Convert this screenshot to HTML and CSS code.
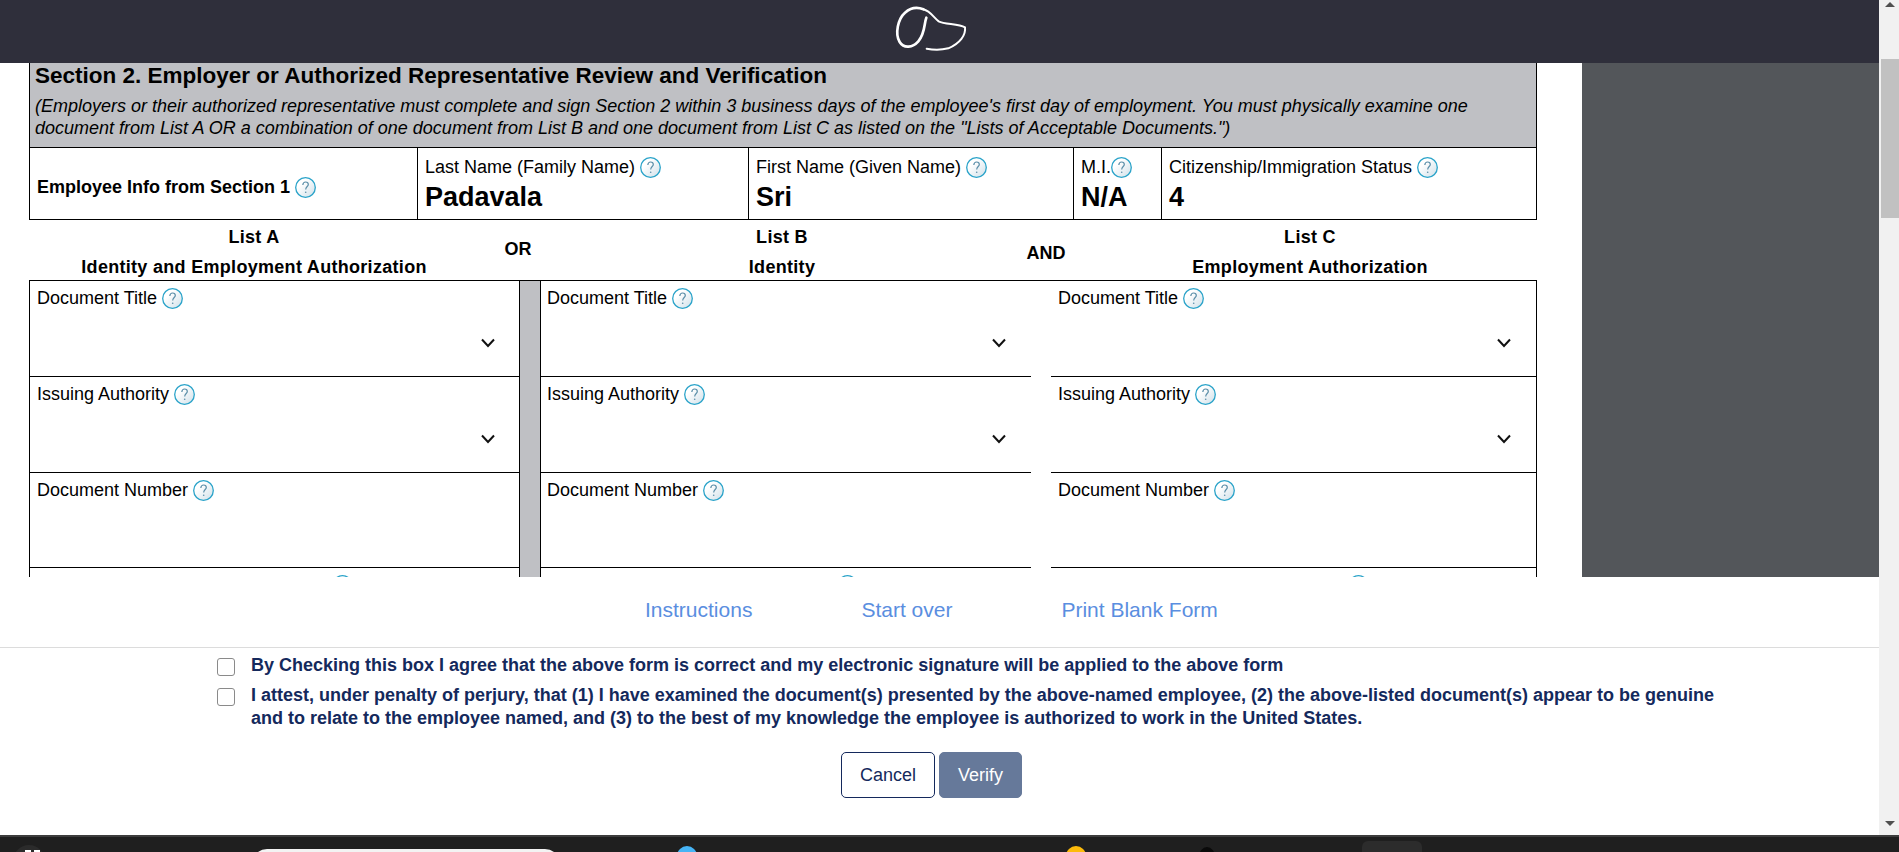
FILE: index.html
```html
<!DOCTYPE html>
<html lang="en">
  <head>
    <meta charset="UTF-8" />
    <meta name="viewport" content="width=device-width, initial-scale=1.0" />
    <title>Section 2 Verification</title>
    <link rel="stylesheet" href="styles.css">
  </head>

  <body>
    <svg class="defs" width="0" height="0">
      <defs>
        <linearGradient id="helpFill" x1="0" y1="0" x2="1" y2="1">
          <stop offset="0.3" stop-color="#ffffff" />
          <stop offset="1" stop-color="#cfdfe8" />
        </linearGradient>
      </defs>
    </svg>

    <div class="window">
      <div class="page">
        <header class="topbar">
          <svg class="logo" width="100" height="60" viewBox="0 0 300 180" fill="none" stroke="#fff" stroke-linecap="round">
            <path d="M139 53C132 70 136 100 115 124C98 143 72 147 59 126C44 102 54 56 75 38C90 25 110 20 130 28" stroke-width="8" />
            <path d="M130 28C152 34 160 52 176 64C195 74 235 70 255 82C258 105 240 130 205 145C185 150 160 150 140 146" stroke-width="6" />
          </svg>
        </header>

        <div class="viewer">
          <div class="doc">
            <section class="form-head">
              <h1>Section 2. Employer or Authorized Representative Review and Verification</h1>
              <p>(Employers or their authorized representative must complete and sign Section 2 within 3 business days of the employee's first day of employment. You must physically examine one document from List A OR a combination of one document from List B and one document from List C as listed on the "Lists of Acceptable Documents.")</p>
            </section>

            <section class="employee-row">
              <div class="cell cell-intro"><b>Employee Info from Section 1</b><svg class="help"><use href="#help" /></svg></div>
              <div class="cell"><span class="label">Last Name (Family Name)<svg class="help"><use href="#help" /></svg></span><strong>Padavala</strong></div>
              <div class="cell"><span class="label">First Name (Given Name)<svg class="help"><use href="#help" /></svg></span><strong>Sri</strong></div>
              <div class="cell"><span class="label">M.I.<svg class="help help-tight"><use href="#help" /></svg></span><strong>N/A</strong></div>
              <div class="cell"><span class="label">Citizenship/Immigration Status<svg class="help"><use href="#help" /></svg></span><strong>4</strong></div>
            </section>

            <section class="list-heads">
              <div class="list-title">List A<br />Identity and Employment Authorization</div>
              <div class="list-join join-or">OR</div>
              <div class="list-title">List B<br />Identity</div>
              <div class="list-join join-and">AND</div>
              <div class="list-title">List C<br />Employment Authorization</div>
            </section>

            <section class="lists">
              <div class="list list-first">
                <div class="field"><span class="label">Document Title<svg class="help"><use href="#help" /></svg></span><svg class="chevron"><use href="#chevron" /></svg></div>
                <div class="field"><span class="label">Issuing Authority<svg class="help"><use href="#help" /></svg></span><svg class="chevron"><use href="#chevron" /></svg></div>
                <div class="field"><span class="label">Document Number<svg class="help"><use href="#help" /></svg></span></div>
                <div class="field"><span class="label"><svg class="help help-far"><use href="#help" /></svg></span></div>
              </div>
              <div class="divider"></div>
              <div class="list list-second">
                <div class="field"><span class="label">Document Title<svg class="help"><use href="#help" /></svg></span><svg class="chevron"><use href="#chevron" /></svg></div>
                <div class="field"><span class="label">Issuing Authority<svg class="help"><use href="#help" /></svg></span><svg class="chevron"><use href="#chevron" /></svg></div>
                <div class="field"><span class="label">Document Number<svg class="help"><use href="#help" /></svg></span></div>
                <div class="field"><span class="label"><svg class="help help-far"><use href="#help" /></svg></span></div>
              </div>
              <div class="list list-third">
                <div class="field"><span class="label">Document Title<svg class="help"><use href="#help" /></svg></span><svg class="chevron"><use href="#chevron" /></svg></div>
                <div class="field"><span class="label">Issuing Authority<svg class="help"><use href="#help" /></svg></span><svg class="chevron"><use href="#chevron" /></svg></div>
                <div class="field"><span class="label">Document Number<svg class="help"><use href="#help" /></svg></span></div>
                <div class="field"><span class="label"><svg class="help help-far"><use href="#help" /></svg></span></div>
              </div>
            </section>
          </div>
          <aside class="side"></aside>
        </div>

        <nav class="links">
          <a>Instructions</a>
          <a>Start over</a>
          <a>Print Blank Form</a>
        </nav>

        <form class="consent">
          <label class="check"><input type="checkbox" /><span>By Checking this box I agree that the above form is correct and my electronic signature will be applied to the above form</span></label>
          <label class="check"><input type="checkbox" /><span>I attest, under penalty of perjury, that (1) I have examined the document(s) presented by the above-named employee, (2) the above-listed document(s) appear to be genuine and to relate to the employee named, and (3) to the best of my knowledge the employee is authorized to work in the United States.</span></label>
          <div class="actions">
            <button type="button" class="btn-cancel">Cancel</button>
            <button type="button" class="btn-verify">Verify</button>
          </div>
        </form>
      </div>

      <div class="scrollbar">
        <span class="arrow-up"></span>
        <div class="track"><div class="thumb"></div></div>
        <span class="arrow-down"></span>
      </div>
    </div>

    <footer class="taskbar">
      <span class="dock-round"></span>
      <span class="dock-search"></span>
      <span class="dock-blue"></span>
      <span class="dock-yellow"></span>
      <span class="dock-dark"></span>
      <span class="dock-square"></span>
    </footer>

    <svg class="defs" width="0" height="0">
      <defs>
        <symbol id="help" viewBox="0 0 21 21">
          <circle cx="10.500" cy="10.500" r="9.800" fill="url(#helpFill)" stroke="#2aa3c9" stroke-width="1.300" />
          <path d="M7.800 8C8 5.900 9.200 5 10.600 5C12.200 5 13.300 6 13.300 7.400C13.300 9.400 10.700 9.800 10.700 12.600" fill="none" stroke="#5a8ea8" stroke-width="1.200" />
          <circle cx="10.700" cy="15.300" r=".8" fill="#5a8ea8" />
        </symbol>
        <symbol id="chevron" viewBox="0 0 16 12">
          <path d="M2 2.500L8 9L14 2.500" fill="none" stroke="#111" stroke-width="2" />
        </symbol>
      </defs>
    </svg>
  </body>
</html>
```

FILE: styles.css
```css
html,
body {
  margin: 0;
  height: 100%;
  overflow: hidden;
}

body {
  display: flex;
  flex-direction: column;
  font-family: "Liberation Sans", Arial, sans-serif;
  font-size: 18px;
  color: #000;
  background: #fff;
}

.defs {
  display: block;
  height: 0;
}

.window {
  display: flex;
  flex: 1;
  min-height: 0;
}

.page {
  flex: 1;
  display: flex;
  flex-direction: column;
  min-width: 0;
}

/* top bar */
.topbar {
  height: 63px;
  box-sizing: border-box;
  padding: 0 19px 3px 0;
  background: #2f2f3b;
  display: flex;
  justify-content: center;
  align-items: center;
}

.viewer {
  display: flex;
  height: 514px;
}

.doc {
  width: 1582px;
  padding-left: 29px;
  padding-right: 45px;
  box-sizing: border-box;
  overflow: hidden;
  background: #fff;
}

.side {
  flex: 1;
  background: #53565a;
}

/* form header */
.form-head {
  background: #bfc0c4;
  border-left: 1px solid #000;
  border-right: 1px solid #000;
  height: 84px;
  box-sizing: border-box;
  padding: 0 5px;
}

.form-head h1 {
  margin: 0;
  font-size: 22.500px;
  line-height: 26px;
  font-weight: bold;
}

.form-head p {
  margin: 6px 0 0;
  line-height: 22px;
  font-style: italic;
}

.employee-row {
  display: grid;
  grid-template-columns: 388px 331px 325px 88px 1fr;
  height: 73px;
  box-sizing: border-box;
  border: 1px solid #000;
}

.cell {
  border-right: 1px solid #000;
  padding: 7px 7px 0;
  display: flex;
  flex-direction: column;
}

.cell:last-child {
  border-right: 0;
}

.cell strong {
  font-size: 27px;
  line-height: 30px;
  margin-top: 3px;
}

.cell-intro {
  flex-direction: row;
  align-items: center;
  padding-top: 8px;
}

.label {
  display: inline-flex;
  align-items: center;
  height: 24px;
  line-height: 24px;
}

.help {
  width: 21px;
  height: 21px;
  margin-left: 5px;
  flex: none;
}

.help-tight {
  margin-left: 0;
}

.help-far {
  margin-left: 290px;
}

.list-first .help-far {
  margin-left: 295px;
}

/* list headings */
.list-heads {
  display: grid;
  grid-template-columns: 450px 78px 450px 78px 450px;
  height: 60px;
  font-weight: bold;
}

.list-title {
  text-align: center;
  line-height: 30px;
  padding-top: 2px;
  letter-spacing: 0.3px;
  white-space: nowrap;
}

.list-join {
  text-align: center;
  line-height: 20px;
}

.join-or {
  padding-top: 19px;
}

.join-and {
  padding-top: 23px;
}

/* the three lists */
.lists {
  display: grid;
  grid-template-columns: 491px 20px 491px 1fr;
  border-top: 1px solid #000;
}

.list-first {
  border-left: 1px solid #000;
}

.list-third {
  margin-left: 20px;
  border-right: 1px solid #000;
}

.divider {
  background: #bfc0c4;
  border-left: 1px solid #000;
  border-right: 1px solid #000;
  margin-left: -1px;
  width: 20px;
}

.field {
  height: 96px;
  box-sizing: border-box;
  border-bottom: 1px solid #000;
  padding: 5px 7px 0;
  display: flex;
  flex-direction: column;
}

.field:nth-child(3) {
  height: 95px;
}

.chevron {
  width: 16px;
  height: 12px;
  align-self: flex-end;
  margin: 27px 17px 0 0;
  flex: none;
}

/* links */
.links {
  height: 70px;
  display: flex;
  align-items: center;
  gap: 109px;
  padding: 0 0 5px 645px;
  box-sizing: border-box;
  font-size: 21px;
  color: #5a8ee0;
}

.consent {
  border-top: 1px solid #dcdcdc;
  padding: 6px 0 0 217px;
  color: #14295c;
  font-weight: bold;
}

.check {
  display: flex;
  gap: 16px;
  width: 1520px;
  line-height: 23px;
  margin-bottom: 7px;
}

.check input {
  appearance: none;
  width: 18px;
  height: 18px;
  margin: 4px 0 0;
  flex: none;
  border: 1.500px solid #8a8a8a;
  border-radius: 3px;
  background: #fff;
}

.actions {
  display: flex;
  gap: 4px;
  margin: 22px 0 0 624px;
}

.actions button {
  height: 46px;
  border-radius: 5px;
  font-family: inherit;
  font-size: 18px;
}

.btn-cancel {
  width: 94px;
  background: #fff;
  color: #14295c;
  border: 1px solid #14295c;
}

.btn-verify {
  width: 83px;
  background: #66799a;
  color: #fff;
  border: 1px solid #66799a;
  font-weight: normal;
}

/* scrollbar */
.scrollbar {
  width: 20px;
  background: #f1f1f1;
  display: flex;
  flex-direction: column;
  align-items: flex-end;
}

.arrow-up,
.arrow-down {
  width: 0;
  height: 0;
  margin-right: 4px;
  border-left: 5px solid transparent;
  border-right: 5px solid transparent;
}

.arrow-up {
  margin-top: 2px;
  border-bottom: 5px solid #505050;
}

.arrow-down {
  margin-bottom: 9px;
  border-top: 5px solid #505050;
}

.track {
  flex: 1;
  width: 18px;
}

.thumb {
  width: 18px;
  height: 159px;
  margin-top: 52px;
  background: #c1c1c1;
}

/* taskbar strip at the bottom edge */
.taskbar {
  height: 17px;
  flex: none;
  box-sizing: border-box;
  background: #1f1f1f;
  border-top: 2px solid #3d3d3d;
  display: flex;
  align-items: flex-start;
  overflow: hidden;
}

.taskbar span {
  flex: none;
}

.dock-round {
  display: flex;
  justify-content: center;
  width: 32px;
  height: 32px;
  margin: 8px 0 0 13px;
  padding-left: 6px;
  box-sizing: border-box;
  border-radius: 50%;
  background: #2b2b2b;
}

.dock-round::after {
  content: "";
  width: 15px;
  height: 10px;
  margin-top: 5px;
  background: linear-gradient(90deg, #fff 40%, transparent 40%, transparent 60%, #fff 60%);
}

.dock-search {
  width: 308px;
  height: 30px;
  margin: 12px 0 0 207px;
  border-radius: 15px;
  background: #f3f3f3;
}

.dock-blue,
.dock-yellow {
  width: 20px;
  height: 20px;
  margin-top: 9px;
  border-radius: 50%;
}

.dock-blue {
  margin-left: 117px;
  background: #46b4f5;
}

.dock-yellow {
  margin-left: 369px;
  background: #fdbb0b;
}

.dock-dark {
  width: 16px;
  height: 20px;
  margin: 10px 0 0 113px;
  border-radius: 50%;
  background: #0a0a0a;
}

.dock-square {
  width: 60px;
  height: 30px;
  margin: 4px 0 0 147px;
  border-radius: 6px;
  background: #2c2c2c;
}
```
